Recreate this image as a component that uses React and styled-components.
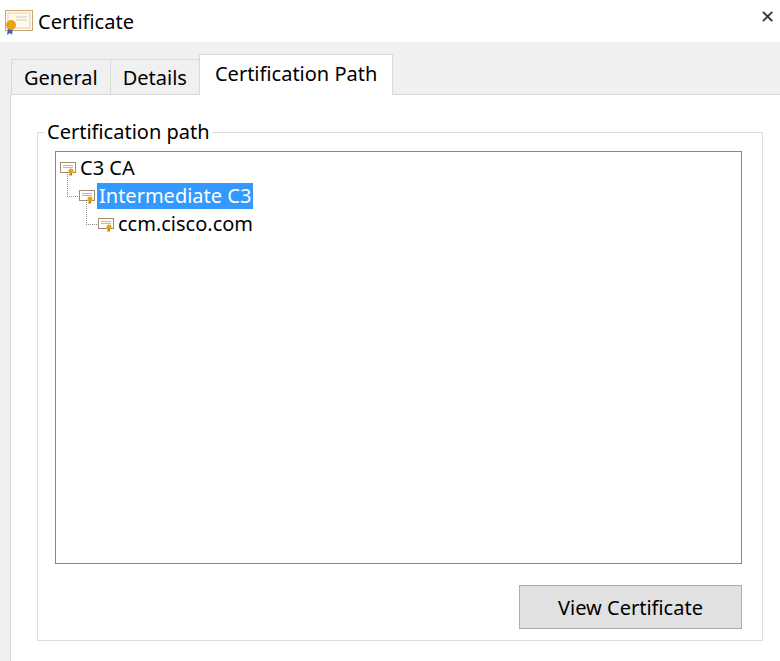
import React from "react";
import styled, { createGlobalStyle } from "styled-components";

const G = createGlobalStyle`
  html,body{margin:0;padding:0;background:#f0f0f0;}
  body{font-family:"Noto Sans","Open Sans",sans-serif;color:#000;width:780px;height:661px;overflow:hidden;}
`;
const Title = styled.div`height:42px;background:#fff;display:flex;align-items:center;padding-left:4px;gap:4px;font-size:20px;position:relative;`;
const Close = styled.div`position:absolute;right:5px;top:4px;font-size:18px;color:#333;`;
const Body = styled.div`padding:12px 0 0 10px;`;
const Tabs = styled.div`display:flex;align-items:flex-end;height:40px;padding-left:2px;`;
const Tab = styled.div`
  height:35px;box-sizing:border-box;padding:0 12px;
  background:#f0f0f0;border:1px solid #d9d9d9;border-bottom:none;
  margin-left:-1px;display:flex;align-items:center;font-size:20px;
  ${p=>p.$a?"background:#fff;padding:0 15px 4px;position:relative;z-index:1;margin-bottom:-1px;height:41px;":""}
`;
const Panel = styled.div`background:#fff;border:1px solid #d9d9d9;border-right:none;height:570px;box-sizing:border-box;padding:27px 17px 0 26px;`;
const Group = styled.fieldset`margin:0;border:1px solid #dcdcdc;padding:9px 20px 0 17px;height:519px;box-sizing:border-box;border-radius:0;
  legend{font-size:20px;padding:0 2px;margin-left:-10px;line-height:20px;}`;
const Tree = styled.div`border:1px solid #828790;height:413px;box-sizing:border-box;padding:2px 0 0 4px;`;
const Row = styled.div`display:flex;align-items:center;height:28px;padding-left:${p=>p.$d*19}px;position:relative;font-size:20px;gap:2px;`;
const Label = styled.span`padding:0 2px;line-height:26px;${p=>p.$s?"background:#3399ff;color:#fff;":""}`;
const Conn = styled.div`position:absolute;left:${p=>p.$d*19-12}px;top:-10px;width:10px;height:24px;border-left:1px dotted #888;border-bottom:1px dotted #888;`;
const Foot = styled.div`display:flex;justify-content:flex-end;padding-top:21px;`;
const Btn = styled.button`width:223px;height:44px;background:#e1e1e1;border:1px solid #adadad;font:inherit;font-size:20px;color:#000;`;

const CertIcon = ({s=16}) => (
  <svg width={s} height={s} viewBox="0 0 16 16">
    <rect x="0.5" y="2.5" width="15" height="10" fill="#fff" stroke="#a08c6e"/>
    <line x1="3" y1="5.5" x2="13" y2="5.5" stroke="#b9b9b9"/>
    <line x1="3" y1="7.5" x2="13" y2="7.5" stroke="#b9b9b9"/>
    <circle cx="11" cy="11" r="2.5" fill="#e6a417"/>
    <path d="M10 13l-1 3 2-1 1 1 0-3z" fill="#c07a10"/>
  </svg>
);
const BigCert = () => (
  <svg width="30" height="30" viewBox="0 0 30 30">
    <rect x="1.5" y="4.5" width="27" height="20" fill="#fffaf0" stroke="#c8a878"/>
    <rect x="4" y="7" width="22" height="15" fill="none" stroke="#e0cfb0"/>
    <line x1="12" y1="11" x2="23" y2="11" stroke="#ccc"/>
    <line x1="12" y1="14" x2="23" y2="14" stroke="#ccc"/>
    <path d="M4 22l-1 7 3-2 2 2 1-7z" fill="#3a63c8"/>
    <circle cx="7" cy="19" r="5" fill="#e8a317"/>
  </svg>
);

const items = [
  { t: "C3 CA", d: 0 },
  { t: "Intermediate C3", d: 1, s: true },
  { t: "ccm.cisco.com", d: 2 },
];

export default function App() {
  return (
    <>
      <G />
      <Title><BigCert />Certificate<Close>✕</Close></Title>
      <Body>
        <Tabs>
          <Tab>General</Tab>
          <Tab>Details</Tab>
          <Tab $a>Certification Path</Tab>
        </Tabs>
        <Panel>
          <Group>
            <legend>Certification path</legend>
            <Tree>
              {items.map(i => (
                <Row key={i.t} $d={i.d}>
                  {i.d > 0 && <Conn $d={i.d} />}
                  <CertIcon />
                  <Label $s={i.s}>{i.t}</Label>
                </Row>
              ))}
            </Tree>
            <Foot><Btn>View Certificate</Btn></Foot>
          </Group>
        </Panel>
      </Body>
    </>
  );
}
